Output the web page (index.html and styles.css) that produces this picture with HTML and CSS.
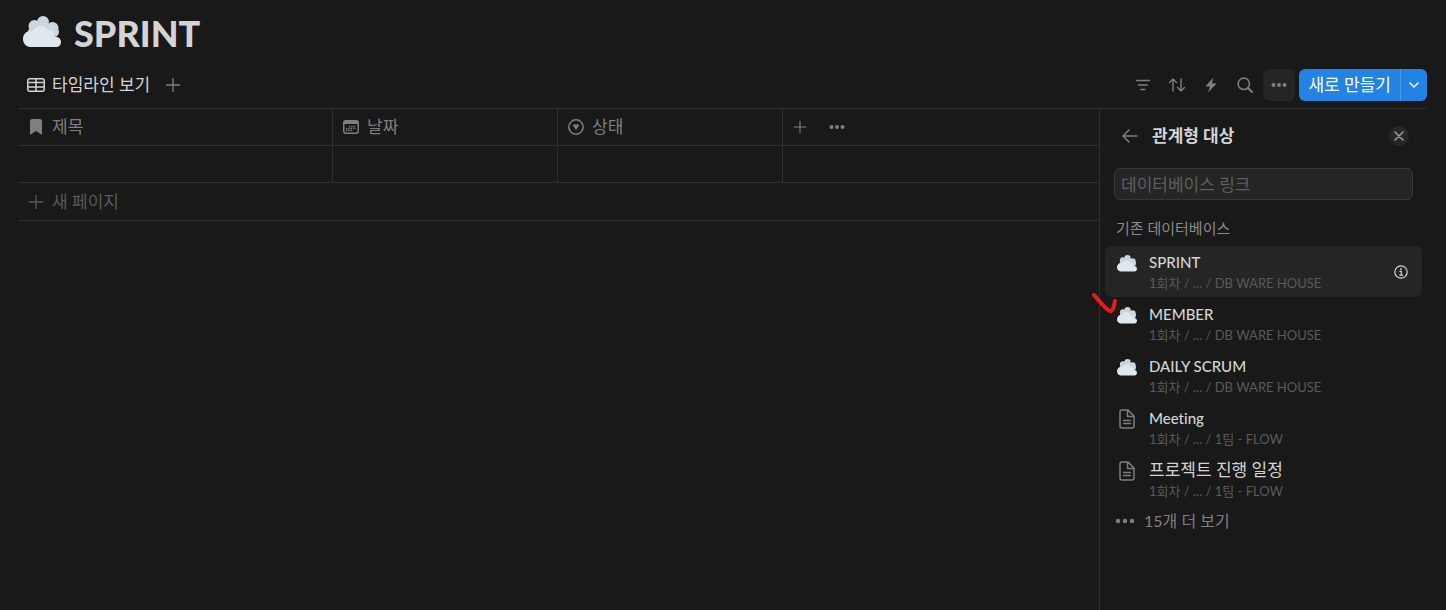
FILE: index.html
```
<!DOCTYPE html>
<html lang="ko">

<head>
  <meta charset="UTF-8" />
  <meta name="viewport" content="width=device-width, initial-scale=1.0" />
  <title>SPRINT</title>
  <link rel="stylesheet" href="styles.css">
</head>

<body>
  <svg class="symbols" aria-hidden="true">
    <symbol id="cloud" viewBox="0 0 38 32">
      <g fill="#ccd6dd">
        <circle cx="20" cy="6" r="6" />
        <circle cx="11.500" cy="10" r="6" />
        <circle cx="29.500" cy="12" r="6" />
        <circle cx="9" cy="16" r="4" />
        <circle cx="31" cy="16" r="5" />
        <rect x="10" y="8" width="19" height="14" />
      </g>
      <path fill="#e1e8ed" d="M7 31C3 31 0 27 0 23C0 18 4 14 10 15C11 12 14 10 18 10C22 10 24 12 25 15C28 13 32 16 31 21C35 20 38 23 38 26C38 29 36 31 33 31Z" />
    </symbol>
    <symbol id="plus" viewBox="0 0 16 16">
      <path d="M8 1V15M1 8H15" fill="none" stroke="currentColor" stroke-width="1.3" />
    </symbol>
    <symbol id="dots" viewBox="0 0 16 16">
      <g fill="currentColor">
        <circle cx="2.5" cy="8" r="2" />
        <circle cx="8" cy="8" r="2" />
        <circle cx="13.5" cy="8" r="2" />
      </g>
    </symbol>
    <symbol id="page" viewBox="0 0 16 20">
      <g fill="none" stroke="currentColor" stroke-width="1.5" stroke-linejoin="round" stroke-linecap="round">
        <path d="M3 1H9L15 7V17Q15 19 13 19H3Q1 19 1 17V3Q1 1 3 1ZM8.500 1V7.500H15" />
        <path d="M4.500 11.500H11.500M4.500 14.500H11.500" stroke-width="1.3" />
      </g>
    </symbol>
  </svg>

  <header class="header">
    <svg class="header-icon"><use href="#cloud" /></svg>
    <h1>SPRINT</h1>
  </header>

  <div class="toolbar">
    <button class="view-tab">
      <svg width="18" height="14" viewBox="0 0 18 14" fill="none" stroke="currentColor" stroke-width="1.5">
        <rect x="0.800" y="0.800" width="16.400" height="12.400" rx="2" />
        <path d="M1 4.500H17M1 9H17M9 1V13" />
      </svg>
      타임라인 보기
    </button>
    <button class="add-view" aria-label="보기 추가"><svg width="16" height="16"><use href="#plus" /></svg></button>

    <div class="tools">
      <button class="tool" aria-label="필터">
        <svg width="16" height="16" viewBox="0 0 16 16" fill="none" stroke="currentColor" stroke-width="1.5" stroke-linecap="round">
          <path d="M1.500 3.500H14.500M3.500 8H12.500M6 12.500H10" />
        </svg>
      </button>
      <button class="tool" aria-label="정렬">
        <svg width="18" height="16" viewBox="0 0 18 16" fill="none" stroke="currentColor" stroke-width="1.400" stroke-linecap="round" stroke-linejoin="round">
          <path d="M5 14V2M1.500 5.500L5 2L8.500 5.500M13 2V14M9.500 10.500L13 14L16.500 10.500" />
        </svg>
      </button>
      <button class="tool" aria-label="자동화">
        <svg width="16" height="16" viewBox="0 0 16 16" fill="currentColor">
          <path d="M10.500 0.500L2.800 9Q2.500 9.500 3 9.500H7L5 15.500L13.200 7Q13.500 6.500 13 6.500H9Z" />
        </svg>
      </button>
      <button class="tool" aria-label="검색">
        <svg width="16" height="16" viewBox="0 0 16 16" fill="none" stroke="currentColor" stroke-width="1.600" stroke-linecap="round">
          <circle cx="6.800" cy="6.800" r="5.700" />
          <path d="M11 11L15 15" stroke-width="2" />
        </svg>
      </button>
      <button class="tool active" aria-label="더 보기"><svg width="16" height="16"><use href="#dots" /></svg></button>
    </div>

    <div class="create">
      <button class="create-main">새로 만들기</button>
      <button class="create-more" aria-label="템플릿">
        <svg width="10" height="6" viewBox="0 0 10 6" fill="none" stroke="currentColor" stroke-width="1.500" stroke-linecap="round" stroke-linejoin="round">
          <path d="M1 1L5 5L9 1" />
        </svg>
      </button>
    </div>
  </div>

  <main class="content">
    <section class="database">
      <table>
        <thead>
          <tr>
            <th class="col-title">
              <div class="cell">
                <svg width="16" height="16" viewBox="0 0 16 16" fill="currentColor">
                  <path d="M2 2Q2 0 4 0H12Q14 0 14 2V16L8 12L2 16Z" />
                </svg>
                제목
              </div>
            </th>
            <th class="col-prop">
              <div class="cell">
                <svg width="16" height="16" viewBox="0 0 16 16">
                  <path fill="currentColor" fill-rule="evenodd" d="M3 1H13Q16 1 16 4V12Q16 15 13 15H3Q0 15 0 12V4Q0 1 3 1ZM1.500 5V12Q1.500 13.500 3 13.500H13Q14.500 13.500 14.500 12V5Z" />
                  <path d="M6 7.500H13M3 9.500H13M3 11.500H10" stroke="currentColor" stroke-width="1.300" stroke-dasharray="1.300 1" />
                </svg>
                날짜
              </div>
            </th>
            <th class="col-prop">
              <div class="cell">
                <svg width="16" height="16" viewBox="0 0 16 16">
                  <circle cx="8" cy="8" r="7.200" fill="none" stroke="currentColor" stroke-width="1.500" />
                  <path d="M5 5.500H11Q11.500 5.500 11.200 6L8.500 10.500Q8 11 7.500 10.500L4.800 6Q4.500 5.500 5 5.500Z" fill="currentColor" />
                </svg>
                상태
              </div>
            </th>
            <th>
              <div class="cell cell-actions">
                <button aria-label="속성 추가"><svg width="14" height="14"><use href="#plus" /></svg></button>
                <button aria-label="속성 더 보기"><svg width="16" height="16"><use href="#dots" /></svg></button>
              </div>
            </th>
          </tr>
        </thead>
        <tbody>
          <tr>
            <td></td>
            <td></td>
            <td></td>
            <td></td>
          </tr>
        </tbody>
      </table>
      <button class="new-page"><svg width="16" height="16"><use href="#plus" /></svg>새 페이지</button>
    </section>

    <aside class="panel">
      <div class="panel-header">
        <button class="back" aria-label="뒤로">
          <svg width="16" height="14" viewBox="0 0 16 14" fill="none" stroke="currentColor" stroke-width="1.500" stroke-linecap="round" stroke-linejoin="round">
            <path d="M7 1L1 7L7 13M1 7H15" />
          </svg>
        </button>
        <h2>관계형 대상</h2>
        <button class="close" aria-label="닫기">
          <svg width="10" height="10" viewBox="0 0 10 10" stroke="currentColor" stroke-width="1.600" stroke-linecap="round">
            <path d="M1 1L9 9M9 1L1 9" />
          </svg>
        </button>
      </div>
      <input class="search" type="text" placeholder="데이터베이스 링크" aria-label="데이터베이스 링크">
      <h3>기존 데이터베이스</h3>
      <ul class="db-list">
        <li class="active">
          <button>
            <svg class="cloud"><use href="#cloud" /></svg>
            <span class="info"><span class="name">SPRINT</span><span class="path">1회차 / ... / DB WARE HOUSE</span></span>
            <svg class="info-icon" width="14" height="14" viewBox="0 0 14 14" fill="none" stroke="currentColor" stroke-width="1.200">
              <circle cx="7" cy="7" r="6.200" />
              <path d="M5.500 6.300H7.300V10M5.300 10.200H9" />
              <circle cx="7" cy="4" r="0.900" fill="currentColor" stroke="none" />
            </svg>
          </button>
        </li>
        <li>
          <button>
            <svg class="cloud"><use href="#cloud" /></svg>
            <span class="info"><span class="name">MEMBER</span><span class="path">1회차 / ... / DB WARE HOUSE</span></span>
          </button>
          <svg class="check-mark" width="26" height="26" viewBox="0 0 26 26" fill="none" stroke="#e51c1c" stroke-width="4" stroke-linecap="round" stroke-linejoin="round">
            <path d="M3 3C7 7 13 16 19 19C21 20 23 16 24 9" />
          </svg>
        </li>
        <li>
          <button>
            <svg class="cloud"><use href="#cloud" /></svg>
            <span class="info"><span class="name">DAILY SCRUM</span><span class="path">1회차 / ... / DB WARE HOUSE</span></span>
          </button>
        </li>
        <li>
          <button>
            <svg class="page"><use href="#page" /></svg>
            <span class="info"><span class="name">Meeting</span><span class="path">1회차 / ... / 1팀 - FLOW</span></span>
          </button>
        </li>
        <li>
          <button>
            <svg class="page"><use href="#page" /></svg>
            <span class="info"><span class="name name-ko">프로젝트 진행 일정</span><span class="path">1회차 / ... / 1팀 - FLOW</span></span>
          </button>
        </li>
      </ul>
      <button class="more"><svg width="20" height="20" viewBox="0 0 20 20" fill="currentColor">
          <circle cx="3" cy="10" r="2.200" />
          <circle cx="10" cy="10" r="2.200" />
          <circle cx="17" cy="10" r="2.200" />
        </svg>15개 더 보기</button>
    </aside>
  </main>
</body>

</html>
```
FILE: styles.css
```
* {
  box-sizing: border-box;
}

body {
  margin: 0;
  padding: 0 19px 0 18px;
  min-height: 100vh;
  display: flex;
  flex-direction: column;
  background: #191919;
  color: #d4d4d4;
  font-family: Lato, "Noto Sans CJK KR", sans-serif;
  font-size: 17px;
  line-height: 24px;
  font-variant-ligatures: none;
}

h1,
h2,
h3,
ul {
  margin: 0;
  padding: 0;
}

button {
  display: flex;
  align-items: center;
  padding: 0;
  border: none;
  background: none;
  color: inherit;
  font: inherit;
  font-variant-ligatures: none;
  cursor: pointer;
}

svg {
  flex-shrink: 0;
}

.symbols {
  position: absolute;
  width: 0;
  height: 0;
}

.header {
  display: flex;
  align-items: center;
  gap: 13px;
  height: 66px;
  padding-left: 5px;
}

.header-icon {
  width: 38px;
  height: 32px;
  margin-bottom: 3px;
}

.header h1 {
  font-size: 36px;
  line-height: 44px;
  font-weight: 900;
}

/* toolbar */
.toolbar {
  display: flex;
  align-items: center;
  height: 43px;
  padding-bottom: 4px;
  border-bottom: 1px solid #2f2f2f;
}

.view-tab {
  gap: 7px;
  padding-left: 9px;
}

.add-view {
  margin-left: 15px;
  color: #7f7f7f;
}

.tools {
  display: flex;
  gap: 2px;
  margin-left: auto;
}

.tool {
  width: 32px;
  height: 32px;
  justify-content: center;
  border-radius: 6px;
  color: #7f7f7f;
}

.tool.active {
  background: #252525;
}

.create {
  display: flex;
  height: 32px;
  margin-left: 4px;
  border-radius: 6px;
  background: #2383e2;
  color: #fff;
  overflow: hidden;
}

.create-main {
  padding: 0 9px;
}

.create-more {
  width: 27px;
  justify-content: center;
  border-left: 1px solid #4a98e6;
}

/* table */
.content {
  flex: 1;
  display: flex;
}

.database {
  flex: 1;
}

table {
  width: 100%;
  table-layout: fixed;
  border-collapse: separate;
  border-spacing: 0;
}

th,
td {
  height: 37px;
  padding: 0;
  border-right: 1px solid #2f2f2f;
  border-bottom: 1px solid #2f2f2f;
}

th:last-child,
td:last-child {
  border-right: none;
}

.col-title {
  width: 315px;
}

.col-prop {
  width: 225px;
}

.cell {
  display: flex;
  align-items: center;
  gap: 8px;
  padding-left: 10px;
  color: #7f7f7f;
  font-weight: 400;
}

.cell-actions {
  gap: 22px;
}

.new-page {
  width: 100%;
  height: 38px;
  gap: 8px;
  padding-left: 10px;
  border-bottom: 1px solid #2f2f2f;
  color: #5a5a5a;
}

/* side panel */
.panel {
  width: 328px;
  padding: 15px 5px 0;
  border-left: 1px solid #2f2f2f;
}

.panel-header {
  display: flex;
  align-items: center;
  padding: 0 13px 0 17px;
}

.panel-header h2 {
  margin-left: 14px;
  font-size: 17px;
  font-weight: 700;
}

.back {
  color: #7f7f7f;
}

.close {
  width: 20px;
  height: 20px;
  margin-left: auto;
  justify-content: center;
  border-radius: 50%;
  background: #272727;
  color: #9b9b9b;
}

.search {
  display: block;
  width: calc(100% - 18px);
  height: 32px;
  margin: 20px 9px 16px;
  padding: 0 6px;
  border: 1px solid #373737;
  border-radius: 6px;
  background: #252525;
  color: #d4d4d4;
  font: inherit;
}

.search::placeholder {
  color: #5f5f5f;
}

.panel h3 {
  padding: 0 11px;
  margin-bottom: 6px;
  color: #8a8a8a;
  font-size: 15px;
  font-weight: 400;
}

.db-list {
  display: flex;
  flex-direction: column;
  gap: 1px;
  list-style: none;
}

.db-list li {
  position: relative;
  border-radius: 6px;
}

.db-list li.active {
  background: #252525;
}

.db-list button {
  width: 100%;
  height: 51px;
  padding: 0 14px 0 12px;
  text-align: left;
}

.cloud {
  width: 20px;
  height: 17px;
  margin-bottom: 17px;
}

.page {
  width: 20px;
  height: 20px;
  margin-bottom: 17px;
  color: #7f7f7f;
}

.info {
  flex: 1;
  display: flex;
  flex-direction: column;
  margin-left: 12px;
}

.name {
  font-size: 15px;
  font-weight: 500;
  line-height: 22px;
}

.name-ko {
  font-size: 17px;
  font-weight: 400;
}

.path {
  color: #5a5a5a;
  font-size: 13px;
  line-height: 20px;
}

.check-mark {
  position: absolute;
  top: -6px;
  left: -14px;
}

.more {
  gap: 9px;
  margin-top: 4px;
  padding-left: 10px;
  color: #7f7f7f;
  font-size: 16px;
}
```
